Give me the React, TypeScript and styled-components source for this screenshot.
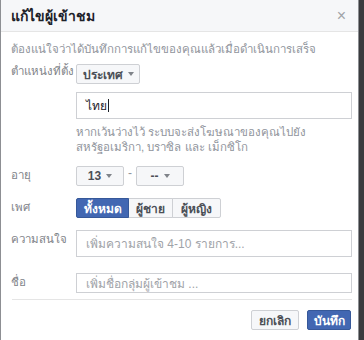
import React from "react";
import styled, { createGlobalStyle } from "styled-components";

const GlobalStyle = createGlobalStyle`
  html, body {
    margin: 0;
    padding: 0;
    background: #3a3b3e;
  }
  body {
    font-family: "Liberation Sans", "Noto Sans", sans-serif;
  }
`;

const Dialog = styled.div`
  width: 359px;
  height: 340px;
  background: #fff;
  border-left: 1px solid #8d8f93;
  border-right: 1px solid #8d8f93;
  box-sizing: border-box;
`;

const Header = styled.div`
  height: 32px;
  background: #f6f7f9;
  border-bottom: 1px solid #e5e5e5;
  box-sizing: border-box;
  display: flex;
  align-items: center;
  justify-content: space-between;
  padding: 0 10px 0 10px;
`;

const Title = styled.h2`
  margin: 0;
  font-size: 14px;
  font-weight: bold;
  color: #1d2129;
`;

const Close = styled.span`
  font-size: 16px;
  color: #a0a3a8;
  line-height: 1;
  margin-right: 2px;
`;

const Body = styled.div`
  padding: 9px 6px 0 10px;
`;

const Intro = styled.p`
  margin: 0 0 7px;
  font-size: 11.5px;
  line-height: 16px;
  color: #90949c;
`;

const Row = styled.div<{ $mt?: number }>`
  display: grid;
  grid-template-columns: 65px 1fr;
  margin-top: ${(p) => p.$mt ?? 0}px;
`;

const Label = styled.div<{ $pt?: number }>`
  font-size: 11.5px;
  color: #7f8389;
  padding-top: ${(p) => p.$pt ?? 0}px;
  line-height: 14px;
`;

const Field = styled.div`
  display: flex;
  align-items: center;
  gap: 4px;
`;

const Dropdown = styled.button<{ $w: number }>`
  width: ${(p) => p.$w}px;
  height: 20px;
  padding: 0;
  border: 1px solid #ced0d4;
  border-radius: 2px;
  background: #f6f7f9;
  color: #4b4f56;
  font-family: inherit;
  font-size: 12px;
  font-weight: bold;
  display: flex;
  align-items: center;
  justify-content: center;
  gap: 5px;
`;

const Caret = styled.span`
  width: 0;
  height: 0;
  border-left: 3.5px solid transparent;
  border-right: 3.5px solid transparent;
  border-top: 4px solid #7f8389;
`;

const Dash = styled.span`
  font-size: 12px;
  color: #90949c;
  margin-top: -6px;
`;

const TextInput = styled.div<{ $h: number; $placeholder?: boolean }>`
  height: ${(p) => p.$h}px;
  border: 1px solid #ced0d4;
  box-sizing: border-box;
  display: flex;
  align-items: center;
  padding-left: 9px;
  font-size: 12px;
  color: ${(p) => (p.$placeholder ? "#a0a3a8" : "#1d2129")};
`;

const Cursor = styled.span`
  display: inline-block;
  width: 1px;
  height: 13px;
  background: #1d2129;
  margin-left: 1px;
`;

const Help = styled.p`
  grid-column: 2;
  margin: 6px 0 0;
  font-size: 11.5px;
  line-height: 15px;
  color: #90949c;
`;

const Segments = styled.div`
  display: flex;
  height: 20px;
`;

const Segment = styled.button<{ $w: number; $active?: boolean }>`
  width: ${(p) => p.$w}px;
  height: 20px;
  padding: 0;
  margin-left: -1px;
  font-family: inherit;
  font-size: 12px;
  font-weight: bold;
  border: 1px solid ${(p) => (p.$active ? "#365899" : "#ced0d4")};
  background: ${(p) => (p.$active ? "#4267b2" : "#f6f7f9")};
  color: ${(p) => (p.$active ? "#fff" : "#4b4f56")};
  position: relative;
  z-index: ${(p) => (p.$active ? 1 : 0)};
  &:first-child {
    margin-left: 0;
    border-radius: 2px 0 0 2px;
  }
  &:last-child {
    border-radius: 0 2px 2px 0;
  }
`;

const Divider = styled.hr`
  margin: 6px 0 0 1px;
  border: 0;
  border-top: 1px solid #e5e5e5;
`;

const Footer = styled.div`
  display: flex;
  justify-content: flex-end;
  gap: 8px;
  margin-top: 10px;
  padding-right: 1px;
`;

const Button = styled.button<{ $primary?: boolean; $w: number }>`
  width: ${(p) => p.$w}px;
  height: 20px;
  padding: 0;
  font-family: inherit;
  font-size: 12px;
  font-weight: bold;
  border-radius: 2px;
  border: 1px solid ${(p) => (p.$primary ? "#365899" : "#ced0d4")};
  background: ${(p) => (p.$primary ? "#4267b2" : "#f6f7f9")};
  color: ${(p) => (p.$primary ? "#fff" : "#4b4f56")};
`;

export default function App() {
  return (
    <>
      <GlobalStyle />
      <Dialog>
        <Header>
          <Title>แก้ไขผู้เข้าชม</Title>
          <Close>×</Close>
        </Header>
        <Body>
          <Intro>ต้องแน่ใจว่าได้บันทึกการแก้ไขของคุณแล้วเมื่อดำเนินการเสร็จ</Intro>
          <Row>
            <Label>ตำแหน่งที่ตั้ง</Label>
            <Field>
              <Dropdown $w={64}>
                ประเทศ <Caret />
              </Dropdown>
            </Field>
          </Row>
          <Row $mt={8}>
            <span />
            <TextInput $h={27}>
              ไทย
              <Cursor />
            </TextInput>
            <Help>
              หากเว้นว่างไว้ ระบบจะส่งโฆษณาของคุณไปยัง
              <br />
              สหรัฐอเมริกา, บราซิล และ เม็กซิโก
            </Help>
          </Row>
          <Row $mt={11}>
            <Label $pt={2}>อายุ</Label>
            <Field>
              <Dropdown $w={48}>
                13 <Caret />
              </Dropdown>
              <Dash>-</Dash>
              <Dropdown $w={48}>
                -- <Caret />
              </Dropdown>
            </Field>
          </Row>
          <Row $mt={12}>
            <Label $pt={2}>เพศ</Label>
            <Segments>
              <Segment $w={53} $active>
                ทั้งหมด
              </Segment>
              <Segment $w={45}>ผู้ชาย</Segment>
              <Segment $w={49}>ผู้หญิง</Segment>
            </Segments>
          </Row>
          <Row $mt={12}>
            <Label $pt={2}>ความสนใจ</Label>
            <TextInput $h={27} $placeholder>
              เพิ่มความสนใจ 4-10 รายการ...
            </TextInput>
          </Row>
          <Row $mt={16}>
            <Label $pt={2}>ชื่อ</Label>
            <TextInput $h={20} $placeholder>
              เพิ่มชื่อกลุ่มผู้เข้าชม ...
            </TextInput>
          </Row>
          <Divider />
          <Footer>
            <Button $w={48}>ยกเลิก</Button>
            <Button $w={44} $primary>
              บันทึก
            </Button>
          </Footer>
        </Body>
      </Dialog>
    </>
  );
}
